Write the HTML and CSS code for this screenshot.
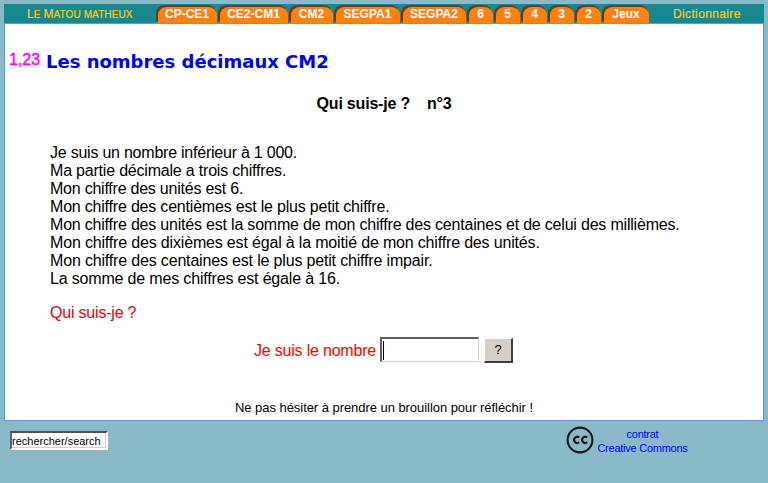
FILE: index.html
```html
<!DOCTYPE html>
<html lang="fr">
<head>
<meta charset="utf-8">
<title>Les nombres décimaux CM2</title>
<link rel="stylesheet" href="styles.css">
</head>
<body>
<nav class="bar">
  <a class="brand"><b>L</b>E <b>M</b>ATOU MATHEUX</a>
  <a class="tab w61">CP-CE1</a>
  <a class="tab w70">CE2-CM1</a>
  <a class="tab w44">CM2</a>
  <a class="tab w66">SEGPA1</a>
  <a class="tab w65">SEGPA2</a>
  <a class="tab w26">6</a>
  <a class="tab w26">5</a>
  <a class="tab w26">4</a>
  <a class="tab w26">3</a>
  <a class="tab w26">2</a>
  <a class="tab w47">Jeux</a>
  <a class="dico">Dictionnaire</a>
</nav>
<main class="panel">
  <header class="title"><span class="num">1,23</span><h1>Les nombres décimaux CM2</h1></header>
  <h2>Qui suis-je ?&nbsp;&nbsp;&nbsp; n°3</h2>
  <div class="clues">
    <p class="tight">Je suis un nombre inférieur à 1 000.</p>
    <p>Ma partie décimale a trois chiffres.</p>
    <p class="tight">Mon chiffre des unités est 6.</p>
    <p>Mon chiffre des centièmes est le plus petit chiffre.</p>
    <p>Mon chiffre des unités est la somme de mon chiffre des centaines et de celui des millièmes.</p>
    <p class="loose">Mon chiffre des dixièmes est égal à la moitié de mon chiffre des unités.</p>
    <p class="loose">Mon chiffre des centaines est le plus petit chiffre impair.</p>
    <p class="loose">La somme de mes chiffres est égale à 16.</p>
    <p class="ask">Qui suis-je ?</p>
  </div>
  <div class="answer">
    <span>Je suis le nombre</span>
    <div class="field"><i class="caret"></i></div>
    <button>?</button>
  </div>
  <p class="hint">Ne pas hésiter à prendre un brouillon pour réfléchir !</p>
</main>
<footer>
  <div class="search">rechercher/search</div>
  <svg class="cc" viewBox="0 0 28 28" width="28" height="28">
    <circle cx="14" cy="14" r="12.4" fill="none" stroke="#1a1a1a" stroke-width="2.1"/>
    <g fill="none" stroke="#1a1a1a" stroke-width="2.2">
      <path d="M13.2 11.4A3.1 3.1 0 1 0 13.2 16.2"/>
      <path d="M21.2 11.4A3.1 3.1 0 1 0 21.2 16.2"/>
    </g>
  </svg>
  <div class="licence">contrat<br>Creative Commons</div>
</footer>
</body>
</html>
```
FILE: styles.css
```css
* { box-sizing: border-box; }
body {
  margin: 0;
  padding: 4px;
  width: 768px;
  height: 483px;
  overflow: hidden;
  background: #8abac8;
  font: 16px/18px "Liberation Sans", Arial, sans-serif;
  color: #000;
}
h1, h2, p { margin: 0; }
.bar {
  display: flex;
  gap: 1px;
  height: 19px;
  padding-top: 1px;
  background: #188890;
  font-size: 12px;
  line-height: 18px;
}
.brand, .dico { color: #fc0; white-space: nowrap; }
.brand { width: 151px; padding-left: 23px; font-size: 10px; letter-spacing: .1px; -webkit-text-stroke: .2px #fc0; }
.brand b { font-size: 12px; font-weight: normal; }
.dico { padding-left: 23px; letter-spacing: .36px; -webkit-text-stroke: .2px #fc0; }
.tab {
  position: relative;
  z-index: 0;
  height: 18px;
  padding-left: 1px;
  text-align: center;
  font-weight: bold;
  color: #fff;
}
.tab::before, .tab::after {
  content: "";
  position: absolute;
  z-index: -1;
  border-radius: 9px 9px 0 0 / 8px 8px 0 0;
}
.tab::before { inset: 0 1px 2px 0; background: #7a3800; }
.tab::after { inset: 2px 0 0 2px; background: #fc8214; }
.w61 { width: 61px; }
.w70 { width: 70px; }
.w44 { width: 44px; }
.w66 { width: 66px; }
.w65 { width: 65px; }
.w26 { width: 26px; }
.w47 { width: 47px; }
.panel {
  height: 398px;
  border: 1px solid #6495ed;
  background: #fff;
}
.title {
  display: flex;
  height: 76px;
  padding: 26px 0 0 4px;
}
.num {
  width: 37px;
  padding-top: 1px;
  color: #f0f;
  -webkit-text-stroke: .4px #f0f;
}
h1 {
  font: bold 18px/23px "DejaVu Sans", Verdana, sans-serif;
  color: #00f;
}
h2, .hint { text-align: center; }
h2 { font-size: 16px; line-height: 18px; margin-top: -5px; letter-spacing: -.2px; }
.clues { padding: 31px 0 0 45px; white-space: nowrap; letter-spacing: -.2px; }
.tight { letter-spacing: -.23px; }
.loose { letter-spacing: -.17px; }
.ask { margin-top: 16px; color: #e8000b; }
.answer {
  display: flex;
  height: 27px;
  margin-top: 15px;
  padding-left: 249px;
  color: #f00;
}
.answer span { width: 126px; padding-top: 5px; white-space: nowrap; letter-spacing: -.2px; }
.field {
  width: 99px;
  height: 25px;
  padding: 2px 1px;
  border: 1px solid #d4d0c8;
  border-top: 2px solid #606060;
  border-left: 2px solid #606060;
  background: #fff;
}
.caret { display: block; width: 1px; height: 19px; background: #000; }
button {
  width: 29px;
  height: 25px;
  margin: 1px 0 0 5px;
  padding: 0;
  border: 1px solid #fff;
  border-right: 2px solid #404040;
  border-bottom: 2px solid #404040;
  background: #d4d0c8;
  font: 13px/22px "Liberation Sans", Arial, sans-serif;
  color: #000;
}
.hint { margin-top: 35px; font-size: 13px; line-height: 18px; letter-spacing: -.05px; }
footer { display: flex; padding-left: 6px; }
.search {
  width: 98px;
  height: 19px;
  margin-top: 10px;
  border: 2px solid #fff;
  border-top-color: #505050;
  border-left-color: #606060;
  box-shadow: inset -1px -1px #d4d0c8;
  background: #fff;
  font: 11px/17px "Liberation Sans", Arial, sans-serif;
  letter-spacing: 0;
}
.cc { margin: 5px 0 0 458px; }
.licence {
  width: 91px;
  margin: 6px 0 0 3px;
  text-align: center;
  font-size: 11px;
  line-height: 14px;
  letter-spacing: -.25px;
  color: #00f;
  white-space: nowrap;
}
```
